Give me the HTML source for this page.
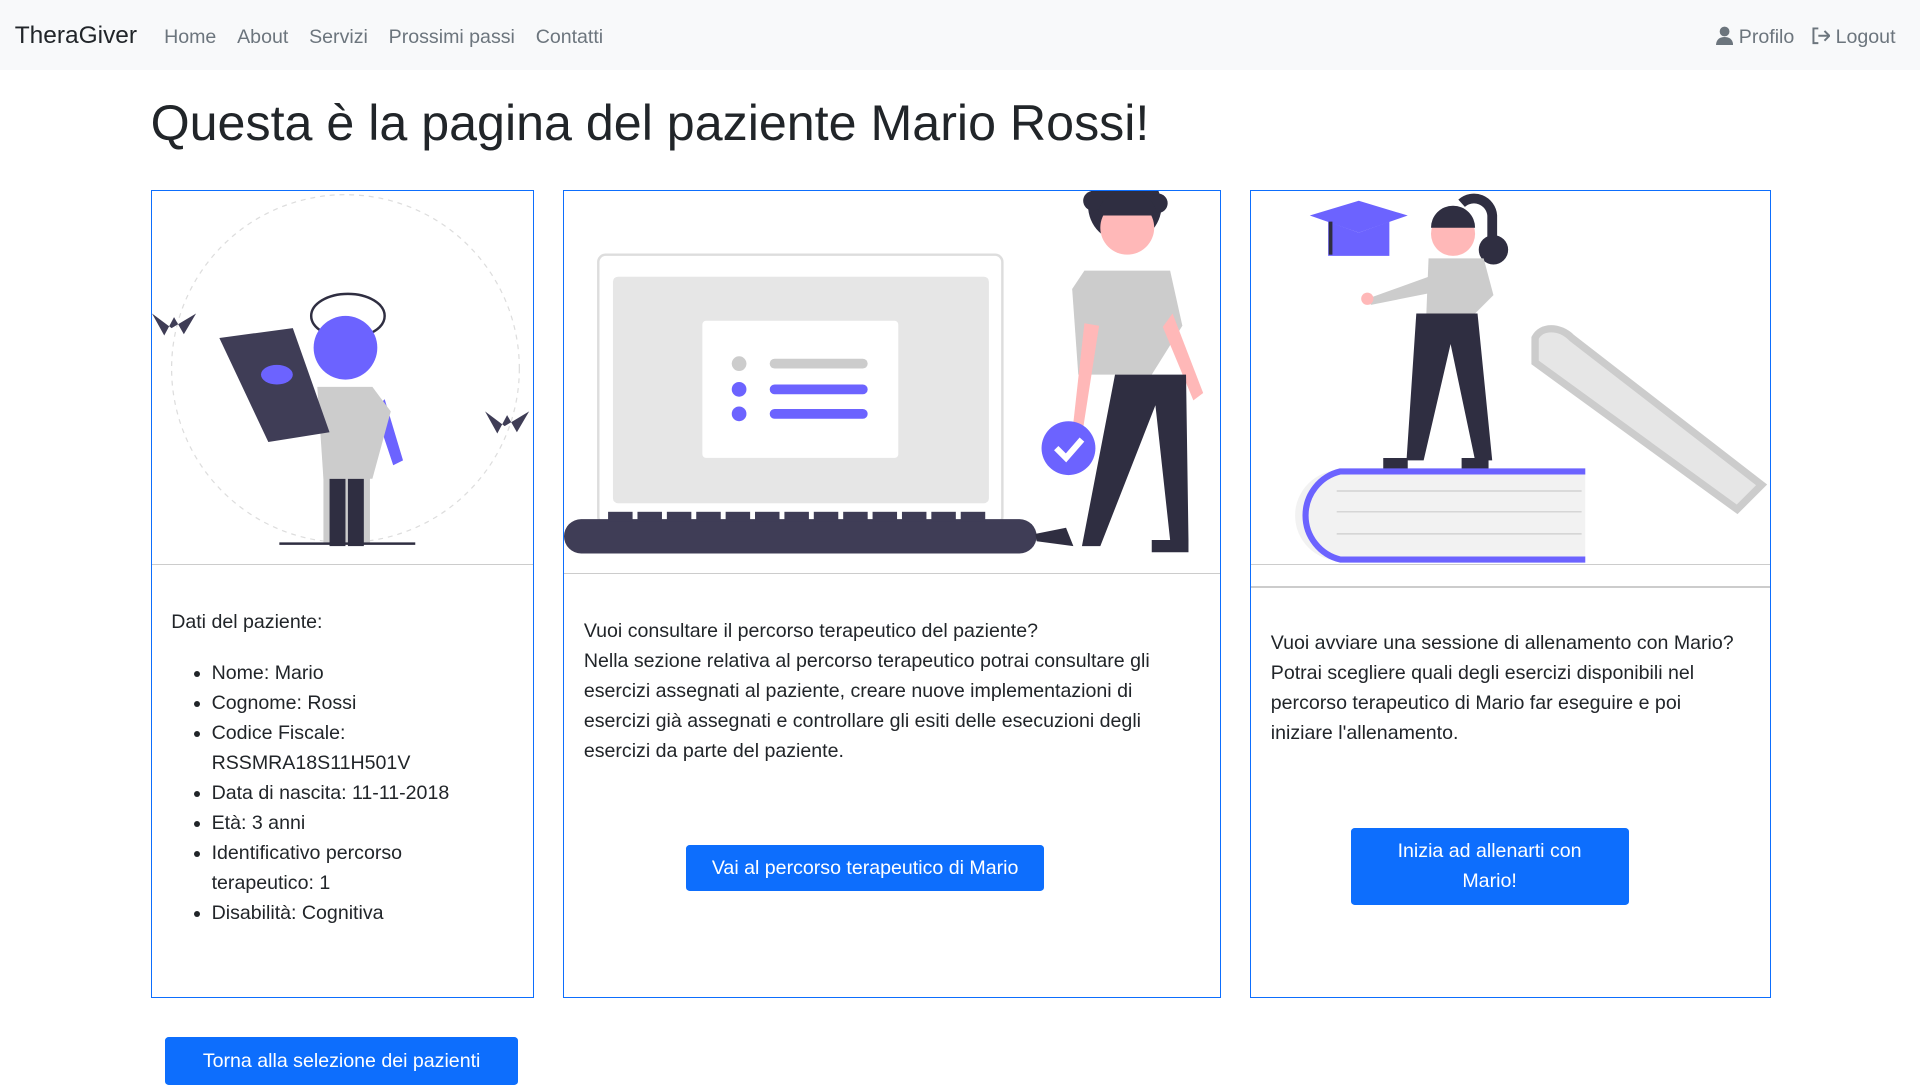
<!DOCTYPE html>
<html><head><meta charset="utf-8">
<style>
html,body{margin:0;padding:0;background:#fff;}
body{width:1568px;height:886px;overflow:hidden;zoom:1.22449;font-family:"Liberation Sans",sans-serif;color:#212529;position:relative;}
.nav{position:absolute;left:0;top:0;width:1568px;height:57px;background:#f8f9fa;}
.brand{position:absolute;left:12px;top:18px;font-size:20px;color:#212529;}
.links{position:absolute;left:134px;top:21px;font-size:16px;color:#6c757d;}
.links span{margin-right:17px;}
.right{position:absolute;right:20px;top:21px;font-size:16px;color:#6c757d;}
h1{position:absolute;left:123px;top:77px;margin:0;font-size:41px;font-weight:500;}
.card{position:absolute;border:1px solid #0d6efd;box-sizing:border-box;top:155px;height:660px;overflow:hidden;}
.card .sep{position:absolute;left:0;right:0;height:1px;background:#ccc;}
.body{position:absolute;left:16px;right:16px;font-size:16px;line-height:24.5px;}
ul{margin:17px 0 0;padding-left:33px;}
.btn{position:absolute;background:#0d6efd;color:#fff;font-size:16px;line-height:24.5px;text-align:center;border-radius:3px;box-sizing:border-box;display:flex;align-items:center;justify-content:center;}
</style></head><body>
<div class="nav">
<div class="brand">TheraGiver</div>
<div class="links"><span>Home</span><span>About</span><span>Servizi</span><span>Prossimi passi</span><span>Contatti</span></div>
<div class="right"><svg width="14" height="16" viewBox="0 0 14 16" style="vertical-align:-2px"><circle cx="7" cy="4.5" r="4" fill="#6c757d"/><path d="M0 16c0-5 3-7 7-7s7 2 7 7z" fill="#6c757d"/></svg> Profilo &nbsp;&nbsp;<svg width="16" height="16" viewBox="0 0 16 16" style="vertical-align:-2px" fill="none" stroke="#6c757d" stroke-width="1.6"><path d="M6 2H2v12h4M6 8h9M11 4l4 4-4 4"/></svg> Logout</div>
</div>
<h1>Questa è la pagina del paziente Mario Rossi!</h1>

<div class="card" style="left:123px;width:313px;">
<svg width="311" height="305" viewBox="0 0 311 305">
<circle cx="158" cy="145" r="142" fill="none" stroke="#ddd" stroke-dasharray="4 4"/>
<path d="M0 100l10 18 8-15 8 14 10-17-20 12z" fill="#3f3d56"/><path d="M272 180l10 18 8-15 8 14 10-17-20 12z" fill="#3f3d56"/>
<rect x="140" y="225" width="38" height="62" fill="#ccc"/>
<rect x="145" y="235" width="13" height="55" fill="#2f2e41"/><rect x="160" y="235" width="13" height="55" fill="#2f2e41"/>
<path d="M190 170l15 50-8 4-15-45z" fill="#6c63ff"/>
<path d="M135 160h45l15 20-15 55h-40z" fill="#ccc"/>
<ellipse cx="160" cy="102" rx="30" ry="18" fill="none" stroke="#2f2e41" stroke-width="2"/>
<circle cx="158" cy="128" r="26" fill="#6c63ff"/>
<path d="M55 120l60-8 30 85-50 8z" fill="#3f3d56"/><ellipse cx="102" cy="150" rx="13" ry="8" fill="#6c63ff"/>
<line x1="104" y1="288" x2="215" y2="288" stroke="#2f2e41" stroke-width="2"/>
</svg>
<div class="sep" style="top:305px"></div>
<div class="body" style="top:340px">Dati del paziente:
<ul><li>Nome: Mario</li><li>Cognome: Rossi</li><li>Codice Fiscale: RSSMRA18S11H501V</li><li>Data di nascita: 11-11-2018</li><li>Età: 3 anni</li><li>Identificativo percorso<br>terapeutico: 1</li><li>Disabilità: Cognitiva</li></ul></div>
</div>

<div class="card" style="left:460px;width:537px;">
<svg width="535" height="312" viewBox="0 0 535 312">
<rect x="28" y="52" width="330" height="220" rx="6" fill="#fff" stroke="#ddd" stroke-width="2"/>
<rect x="40" y="70" width="307" height="185" rx="4" fill="#e6e6e6"/>
<rect x="113" y="106" width="160" height="112" rx="3" fill="#fff"/>
<circle cx="143" cy="141" r="6" fill="#ccc"/><rect x="168" y="137" width="80" height="8" rx="4" fill="#ccc"/>
<circle cx="143" cy="162" r="6" fill="#6c63ff"/><rect x="168" y="158" width="80" height="8" rx="4" fill="#6c63ff"/>
<circle cx="143" cy="182" r="6" fill="#6c63ff"/><rect x="168" y="178" width="80" height="8" rx="4" fill="#6c63ff"/>
<rect x="0" y="268" width="386" height="28" rx="14" fill="#3f3d56"/>
<g fill="#3f3d56"><rect x="36" y="262" width="20" height="8"/><rect x="60" y="262" width="20" height="8"/><rect x="84" y="262" width="20" height="8"/><rect x="108" y="262" width="20" height="8"/><rect x="132" y="262" width="20" height="8"/><rect x="156" y="262" width="20" height="8"/><rect x="180" y="262" width="20" height="8"/><rect x="204" y="262" width="20" height="8"/><rect x="228" y="262" width="20" height="8"/><rect x="252" y="262" width="20" height="8"/><rect x="276" y="262" width="20" height="8"/><rect x="300" y="262" width="20" height="8"/><rect x="324" y="262" width="20" height="8"/></g>
<circle cx="458" cy="12" r="30" fill="#2f2e41"/><circle cx="432" cy="8" r="8" fill="#2f2e41"/><circle cx="485" cy="10" r="8" fill="#2f2e41"/>
<circle cx="460" cy="30" r="22" fill="#ffb8b8"/><path d="M436 20a24 20 0 0 1 48 0z" fill="#2f2e41"/>
<path d="M425 65h70l10 45-25 40h-60l-5-70z" fill="#ccc"/>
<path d="M425 108l-10 90 8 2 14-90z" fill="#ffb8b8"/><path d="M497 100l25 65-8 6-25-60z" fill="#ffb8b8"/>
<path d="M450 150h58l2 135h-15l-12-110-45 115h-15z" fill="#2f2e41"/>
<path d="M385 280l25-5 6 15-30-4z" fill="#2f2e41"/><path d="M480 285h30v10h-30z" fill="#2f2e41"/>
<circle cx="412" cy="210" r="22" fill="#6c63ff"/><path d="M402 210l8 8 13-15" stroke="#fff" stroke-width="5" fill="none"/>
</svg>
<div class="sep" style="top:312px"></div>
<div class="body" style="top:347px">Vuoi consultare il percorso terapeutico del paziente?<br>Nella sezione relativa al percorso terapeutico potrai consultare gli esercizi assegnati al paziente, creare nuove implementazioni di esercizi già assegnati e controllare gli esiti delle esecuzioni degli esercizi da parte del paziente.</div>
</div>
<div class="btn" style="left:560px;top:690px;width:293px;height:38px;">Vai al percorso terapeutico di Mario</div>

<div class="card" style="left:1021px;width:425px;">
<svg width="423" height="324" viewBox="0 0 423 324">
<path d="M48 20l40-12 40 12-40 14z" fill="#6c63ff"/><path d="M63 25v28h50v-28l-25 9z" fill="#6c63ff"/><line x1="65" y1="25" x2="65" y2="52" stroke="#2f2e41" stroke-width="3"/>
<path d="M172 10a15 15 0 0 1 25 10v25" stroke="#2f2e41" stroke-width="8" fill="none"/><circle cx="198" cy="48" r="12" fill="#2f2e41"/>
<circle cx="165" cy="35" r="18" fill="#ffb8b8"/><path d="M147 30a18 18 0 0 1 36 0z" fill="#2f2e41"/>
<path d="M145 55h45l8 30-20 20h-35z" fill="#ccc"/><path d="M145 70l-50 18 3 5 50-10z" fill="#ccc"/><circle cx="95" cy="88" r="5" fill="#ffb8b8"/>
<path d="M135 100h50l12 120h-14l-20-95-22 95h-14z" fill="#2f2e41"/>
<path d="M108 218h20v10h-20zM172 218h22v10h-22z" fill="#2f2e41"/>
<path d="M232 120c5-10 20-10 30 0l155 120-20 20-165-120z" fill="#e6e6e6" stroke="#ccc" stroke-width="6"/>
<path d="M73 228h200v74h-200a37 37 0 0 1 0-74z" fill="#f2f2f2"/>
<path d="M273 229h-200a37 37 0 0 0 0 72h200" stroke="#6c63ff" stroke-width="5" fill="none"/>
<g stroke="#ccc"><line x1="70" y1="245" x2="270" y2="245"/><line x1="70" y1="262" x2="270" y2="262"/><line x1="70" y1="280" x2="270" y2="280"/></g>
</svg>
<div class="sep" style="top:305px"></div><div class="sep" style="top:323px"></div>
<div class="body" style="top:357px">Vuoi avviare una sessione di allenamento con Mario? Potrai scegliere quali degli esercizi disponibili nel percorso terapeutico di Mario far eseguire e poi<br>iniziare l'allenamento.</div>
</div>
<div class="btn" style="left:1103px;top:676px;width:227px;height:63px;">Inizia ad allenarti con<br>Mario!</div>

<div class="btn" style="left:135px;top:847px;width:288px;height:39px;">Torna alla selezione dei pazienti</div>
</body></html>
